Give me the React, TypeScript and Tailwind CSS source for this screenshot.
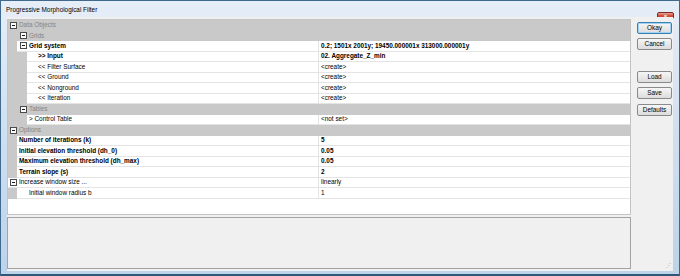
import React from "react";

type PropRow = {
  kind: "prop";
  label: string;
  value: string;
  // marge grise à gauche, largeur de la cellule libellé, retrait du texte
  gutter: string;
  cell: string;
  indent: string;
  toggle?: string;
  bold?: boolean;
};

type CatRow = { kind: "cat"; label: string; indent: string };

type Row = CatRow | PropRow;

const rows: Row[] = [
  { kind: "cat", label: "Data Objects", indent: "w-[2px]" },
  { kind: "cat", label: "Grids", indent: "w-[12px]" },
  {
    kind: "prop",
    label: "Grid system",
    value: "0.2; 1501x 2001y; 19450.000001x 313000.000001y",
    gutter: "w-[9px]",
    cell: "w-[301px]",
    indent: "w-[2px]",
    toggle: "w-[3px]",
    bold: true,
  },
  { kind: "prop", label: ">> Input", value: "02. Aggregate_Z_min", gutter: "w-[19px]", cell: "w-[291px]", indent: "w-[11px]", bold: true },
  { kind: "prop", label: "<< Filter Surface", value: "<create>", gutter: "w-[19px]", cell: "w-[291px]", indent: "w-[11px]" },
  { kind: "prop", label: "<< Ground", value: "<create>", gutter: "w-[19px]", cell: "w-[291px]", indent: "w-[11px]" },
  { kind: "prop", label: "<< Nonground", value: "<create>", gutter: "w-[19px]", cell: "w-[291px]", indent: "w-[11px]" },
  { kind: "prop", label: "<< Iteration", value: "<create>", gutter: "w-[19px]", cell: "w-[291px]", indent: "w-[11px]" },
  { kind: "cat", label: "Tables", indent: "w-[12px]" },
  { kind: "prop", label: "> Control Table", value: "<not set>", gutter: "w-[19px]", cell: "w-[291px]", indent: "w-[2px]" },
  { kind: "cat", label: "Options", indent: "w-[2px]" },
  { kind: "prop", label: "Number of iterations (k)", value: "5", gutter: "w-[9px]", cell: "w-[301px]", indent: "w-[2px]", bold: true },
  { kind: "prop", label: "Initial elevation threshold (dh_0)", value: "0.05", gutter: "w-[9px]", cell: "w-[301px]", indent: "w-[2px]", bold: true },
  { kind: "prop", label: "Maximum elevation threshold (dh_max)", value: "0.05", gutter: "w-[9px]", cell: "w-[301px]", indent: "w-[2px]", bold: true },
  { kind: "prop", label: "Terrain slope (s)", value: "2", gutter: "w-[9px]", cell: "w-[301px]", indent: "w-[2px]", bold: true },
  {
    kind: "prop",
    label: "Increase window size ...",
    value: "linearly",
    gutter: "w-0",
    cell: "w-[310px]",
    indent: "w-[2px]",
    toggle: "w-[2px]",
  },
  { kind: "prop", label: "Initial window radius b", value: "1", gutter: "w-[9px]", cell: "w-[301px]", indent: "w-[12px]" },
];

// petite case carrée avec le signe moins (nœud déplié)
function Toggle() {
  return (
    <span className="flex h-[7px] w-[7px] shrink-0 items-center justify-center border border-[#4a4a4a] bg-[#fafafa]">
      <span className="h-px w-[3px] bg-[#1a1a1a]" />
    </span>
  );
}

function GridRow({ row }: { row: Row }) {
  if (row.kind === "cat") {
    return (
      <div className="flex h-[10.5px] items-center bg-[#c9c9c9] text-[#858585]">
        <span className={`${row.indent} shrink-0`} />
        <Toggle />
        <span className="w-[2px] shrink-0" />
        <span>{row.label}</span>
      </div>
    );
  }

  return (
    <div className={`flex h-[10.5px] ${row.bold ? "font-bold" : ""}`}>
      <div className={`${row.gutter} shrink-0 bg-[#c9c9c9]`} />
      <div className={`${row.cell} flex shrink-0 items-center border-b border-[#e4e4e4] bg-white`}>
        {row.toggle && (
          <>
            <span className={`${row.toggle} shrink-0`} />
            <Toggle />
          </>
        )}
        <span className={`${row.indent} shrink-0`} />
        <span className="whitespace-nowrap">{row.label}</span>
      </div>
      <div className="flex flex-1 items-center border-b border-l border-[#e4e4e4] bg-white pl-[2px] whitespace-nowrap">
        {row.value}
      </div>
    </div>
  );
}

function DialogButton({ label, primary, className }: { label: string; primary?: boolean; className?: string }) {
  return (
    <button
      className={`flex h-[12px] w-[35px] items-center justify-center rounded-[2px] border bg-gradient-to-b from-[#f6f6f6] to-[#dcdcdc] text-[6.4px] text-black ${
        primary ? "border-[#3c7fb1] shadow-[inset_0_0_0_1px_#9fd3f3]" : "border-[#8a8a8a]"
      } ${className ?? ""}`}
    >
      {label}
    </button>
  );
}

export default function App() {
  return (
    <div
      className="flex h-[276px] w-[680px] flex-col border border-b-2 border-[#40698e] border-b-[#2c5877] bg-gradient-to-b from-[#e6eef8] via-[#cfdff0] to-[#bcd3ea] text-[6.4px] leading-none text-black"
      style={{ fontFamily: '"Liberation Sans", Arial, sans-serif' }}
    >
      {/* Barre de titre */}
      <div className="flex h-[16px] shrink-0 items-start justify-between pl-[5px] pr-[5px]">
        <span className="mt-[6px]">Progressive Morphological Filter</span>
        <span className="mt-[11px] flex h-[7px] w-[17px] items-center justify-center rounded-[2px] border border-[#7a2a2a] bg-gradient-to-b from-[#e8a493] via-[#d2523f] to-[#c13d2a] text-[6px] font-bold text-white">
          ×
        </span>
      </div>

      {/* Zone cliente */}
      <div className="mx-[6px] mb-[3px] flex flex-1 bg-[#f0f0f0] py-[2px]">
        <div className="flex w-[624px] flex-col gap-[2px]">
          <div className="h-[196px] border border-[#c4c4c4] bg-white">
            {rows.map((row) => (
              <GridRow key={row.label} row={row} />
            ))}
          </div>
          <div className="flex-1 border border-[#a3a3a3] bg-[#f0f0f0]" />
        </div>

        <div className="flex flex-1 flex-col items-start pl-[6px] pt-[3px]">
          <DialogButton label="Okay" primary />
          <DialogButton label="Cancel" className="mt-[4px]" />
          <DialogButton label="Load" className="mt-[21px]" />
          <DialogButton label="Save" className="mt-[4px]" />
          <DialogButton label="Defaults" className="mt-[5px]" />
          <div className="mt-auto flex w-full justify-end pr-[2px] pb-[1px] text-[5px] text-[#a0a0a0]">⋰</div>
        </div>
      </div>
    </div>
  );
}
